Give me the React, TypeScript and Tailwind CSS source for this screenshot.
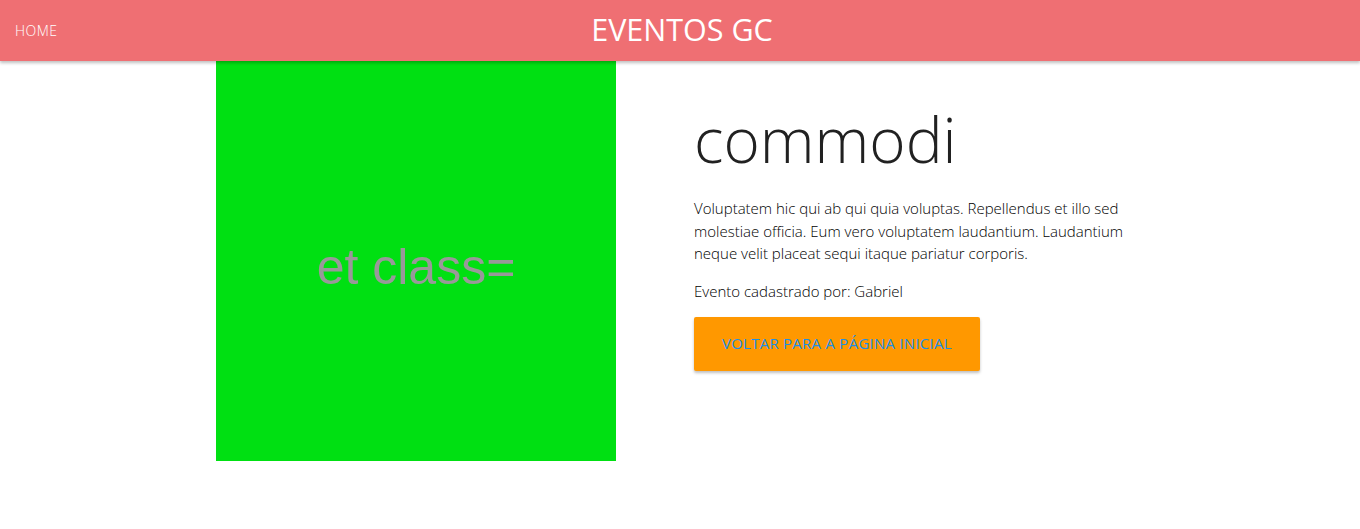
import React from 'react';

const App: React.FC = () => {
    return (
        <div className="min-h-[529px] bg-white font-['Open_Sans',sans-serif] text-[#222]">
            <nav className="relative h-[61px] bg-[#ef6f73] shadow-[0_2px_3px_rgba(0,0,0,0.25)] z-10 flex items-center">
                <a href="#" className="pl-[15px] text-[14px] text-white font-light tracking-[0.5px]">HOME</a>
                <span className="absolute left-1/2 -translate-x-1/2 top-[9px] text-[30.5px] text-white leading-[40px] ml-[2px]">EVENTOS GC</span>
            </nav>

            <div className="mx-auto w-[70%]">
                <div className="flex">
                    <div className="w-1/2 px-3">
                        <div className="w-[400px] h-[400px] bg-[#00e012] flex items-center justify-center">
                            <span className="font-['Liberation_Sans',sans-serif] text-[50px] text-[#999] mt-[12px]">et class=</span>
                        </div>
                    </div>
                    <div className="w-1/2 px-3 pl-[14px]">
                        <h1 className="mt-[43px] mb-[23px] text-[62px] font-light leading-[70px] text-[#212121]">commodi</h1>
                        <p className="text-[15px] leading-[22.5px] text-black font-light w-[452px]">
                            Voluptatem hic qui ab qui quia voluptas. Repellendus et illo sed molestiae officia. Eum vero voluptatem laudantium. Laudantium neque velit placeat sequi itaque pariatur corporis.
                        </p>
                        <p className="mt-[15px] text-[15px] leading-[22px] text-black font-light">Evento cadastrado por: Gabriel</p>
                        <button className="mt-[15px] h-[54px] px-[28px] bg-[#ff9800] rounded-[2px] shadow-[0_2px_3px_rgba(0,0,0,0.25)] text-[15px] text-[#1a8fe8] tracking-[0.25px]">
                            VOLTAR PARA A PÁGINA INICIAL
                        </button>
                    </div>
                </div>
            </div>
        </div>
    );
};

export default App;
